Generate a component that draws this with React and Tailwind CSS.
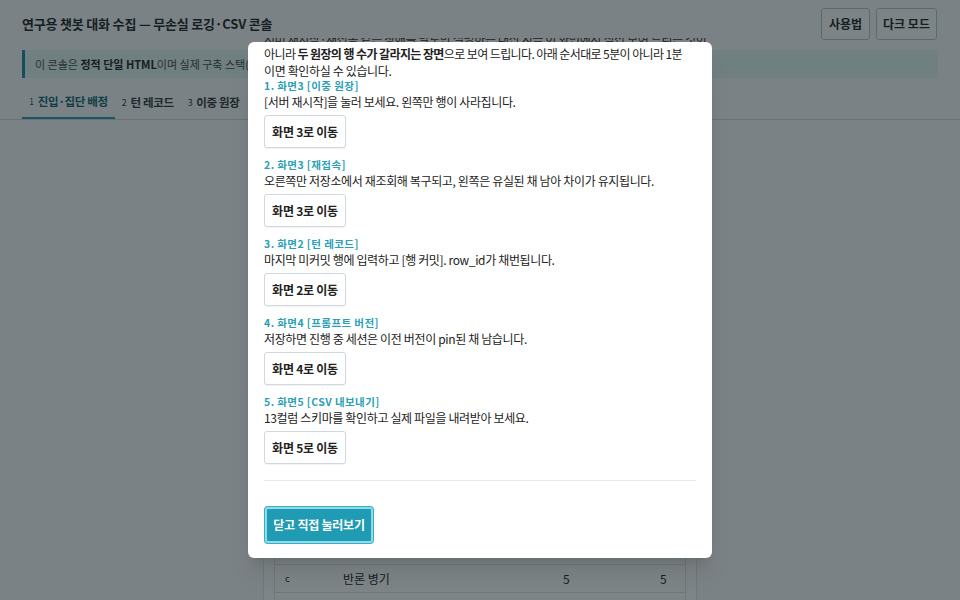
const STEPS = [
  { n: 1, screen: 3, tag: '이중 원장', desc: '[서버 재시작]을 눌러 보세요. 왼쪽만 행이 사라집니다.' },
  { n: 2, screen: 3, tag: '재접속', desc: '오른쪽만 저장소에서 재조회해 복구되고, 왼쪽은 유실된 채 남아 차이가 유지됩니다.' },
  { n: 3, screen: 2, tag: '턴 레코드', desc: '마지막 미커밋 행에 입력하고 [행 커밋]. row_id가 채번됩니다.' },
  { n: 4, screen: 4, tag: '프롬프트 버전', desc: '저장하면 진행 중 세션은 이전 버전이 pin된 채 남습니다.' },
  { n: 5, screen: 5, tag: 'CSV 내보내기', desc: '13컬럼 스키마를 확인하고 실제 파일을 내려받아 보세요.' },
]

const TABS = ['진입·집단 배정', '턴 레코드', '이중 원장', '프롬프트 버전', 'CSV 내보내기']

const ROWS = [
  { k: '', label: '항목', a: '원장 A', b: '원장 B' },
  { k: 'a', label: '근거 제시', a: '5', b: '5' },
  { k: 'b', label: '질문 되묻기', a: '5', b: '5' },
  { k: 'c', label: '반론 병기', a: '5', b: '5' },
  { k: 'd', label: '요약 확인', a: '5', b: '5' },
]

export default function App() {
  return (
    <div className="relative h-[600px] overflow-hidden bg-[#f5f7f8] text-[#2b3236] font-['Noto_Sans_CJK_KR','Noto_Sans',sans-serif]">
      {/* page behind the dialog */}
      <header className="flex items-center justify-between pl-[22px] pr-[23px] pt-[8px]">
        <h1 className="text-[13px] font-bold tracking-[-0.015em]">연구용 챗봇 대화 수집 — 무손실 로깅·CSV 콘솔</h1>
        <div className="flex gap-[6px]">
          <button className="h-[32px] w-[49px] rounded-[3px] border border-[#b9c2c6] bg-[#f8fafb] text-[12px] font-bold">사용법</button>
          <button className="h-[32px] w-[61px] rounded-[3px] border border-[#b9c2c6] bg-[#f8fafb] text-[12px] font-bold">다크 모드</button>
        </div>
      </header>

      <div className="mx-[22px] mt-[10px] flex h-[28px] items-center border-l-[3px] border-[#2a8e9e] bg-[#def0ee] pl-[10px] text-[11px] text-[#4a5559]">
        <span>
          이 콘솔은 <b className="text-[#2b3236]">정적 단일 HTML</b>이며 실제 구축 스택(Python·FastAPI)을 흉내 냅니다.
        </span>
      </div>

      <nav className="mt-[8px] flex border-b border-[#cfd6d9] pl-[22px]">
        {TABS.map((t, i) => (
          <div
            key={t}
            className={
              i === 0
                ? 'flex h-[33px] items-center gap-[4px] border-b-2 border-[#2f9fb4] px-[7px] text-[11.5px] font-bold tracking-[-0.03em] text-[#1e6f7e]'
                : 'flex h-[33px] items-center gap-[4px] px-[7px] text-[11.5px] font-bold tracking-[-0.03em] text-[#3c4549]'
            }
          >
            <span className="text-[9px] font-normal">{i + 1}</span>
            {t}
          </div>
        ))}
      </nav>

      <section className="mx-auto mt-[16px] w-[434px] rounded-[4px] border border-[#dde3e6] bg-[#fbfcfc] px-[10px] pt-[11px]">
        <div className="h-[332px]">
          <h2 className="text-[13px] font-bold">집단 배정 결과</h2>
          <p className="mt-2 text-[12px] text-[#59646a]">세션별 무작위 배정 결과와 항목별 점수를 두 원장에서 비교합니다.</p>
        </div>
        <div className="border-x border-[#dde3e6]">
          {ROWS.map((r, i) => (
            <div key={i} className="grid h-[28px] grid-cols-[58px_220px_97px_1fr] items-center border-t border-[#dde3e6] text-[12px]">
              <span className="pl-[10px] text-[9px]">{r.k}</span>
              <span className="pl-[10px]">{r.label}</span>
              <span className="pl-[10px]">{r.a}</span>
              <span className="pl-[10px]">{r.b}</span>
            </div>
          ))}
        </div>
      </section>

      {/* dialog */}
      <div className="absolute inset-0 z-10 bg-[rgba(2,14,18,0.5)] pt-[38px]">
        <div className="mx-auto flex h-[4px] w-[464px] items-end overflow-hidden px-4">
          <p className="-mb-[5px] whitespace-nowrap text-[12px] leading-[17px] tracking-[-0.03em] text-[#222]">
            서버 재시작·재접속 같은 장애를 말로만 설명하는 대신 지금 이 화면에서 직접 보여 드리는 것이
          </p>
        </div>
        <div className="mx-auto h-[516px] w-[464px] overflow-hidden rounded-[6px] bg-white px-4 pt-[3px] text-[#222] shadow-xl">
          <p className="text-[12px] leading-[17px]">
            <span className="block whitespace-nowrap tracking-[-0.05em]">
              아니라 <b>두 원장의 행 수가 갈라지는 장면</b>으로 보여 드립니다. 아래 순서대로 5분이 아니라 1분
            </span>
            <span className="block tracking-[-0.03em]">이면 확인하실 수 있습니다.</span>
          </p>

          <ol>
            {STEPS.map(s => (
              <li key={s.n} className="mb-[10px]">
                <div className="text-[10.5px] font-bold leading-[14px] tracking-[0.04em] text-[#2b9fb6]">
                  {s.n}. 화면{s.screen} [{s.tag}]
                </div>
                <div className="text-[12px] leading-[18px] tracking-[-0.03em]">{s.desc}</div>
                <button className="mt-[4px] h-[33px] w-[82px] rounded-[3px] border border-[#cfd8dc] bg-white text-[12px] font-bold tracking-[-0.02em] text-[#222] shadow-[0_1px_1px_rgba(0,0,0,0.05)]">
                  화면 {s.screen}로 이동
                </button>
              </li>
            ))}
          </ol>

          <hr className="mt-[16px] border-t border-[#e6ecee]" />

          <button className="ml-[1px] mt-[26px] h-[36px] w-[108px] rounded-[3px] border-2 border-[#8fdbea] bg-[#1f9bb3] text-[12px] font-bold tracking-[-0.02em] text-white ring-1 ring-[#3aaec4]">
            닫고 직접 눌러보기
          </button>
        </div>
      </div>
    </div>
  )
}
